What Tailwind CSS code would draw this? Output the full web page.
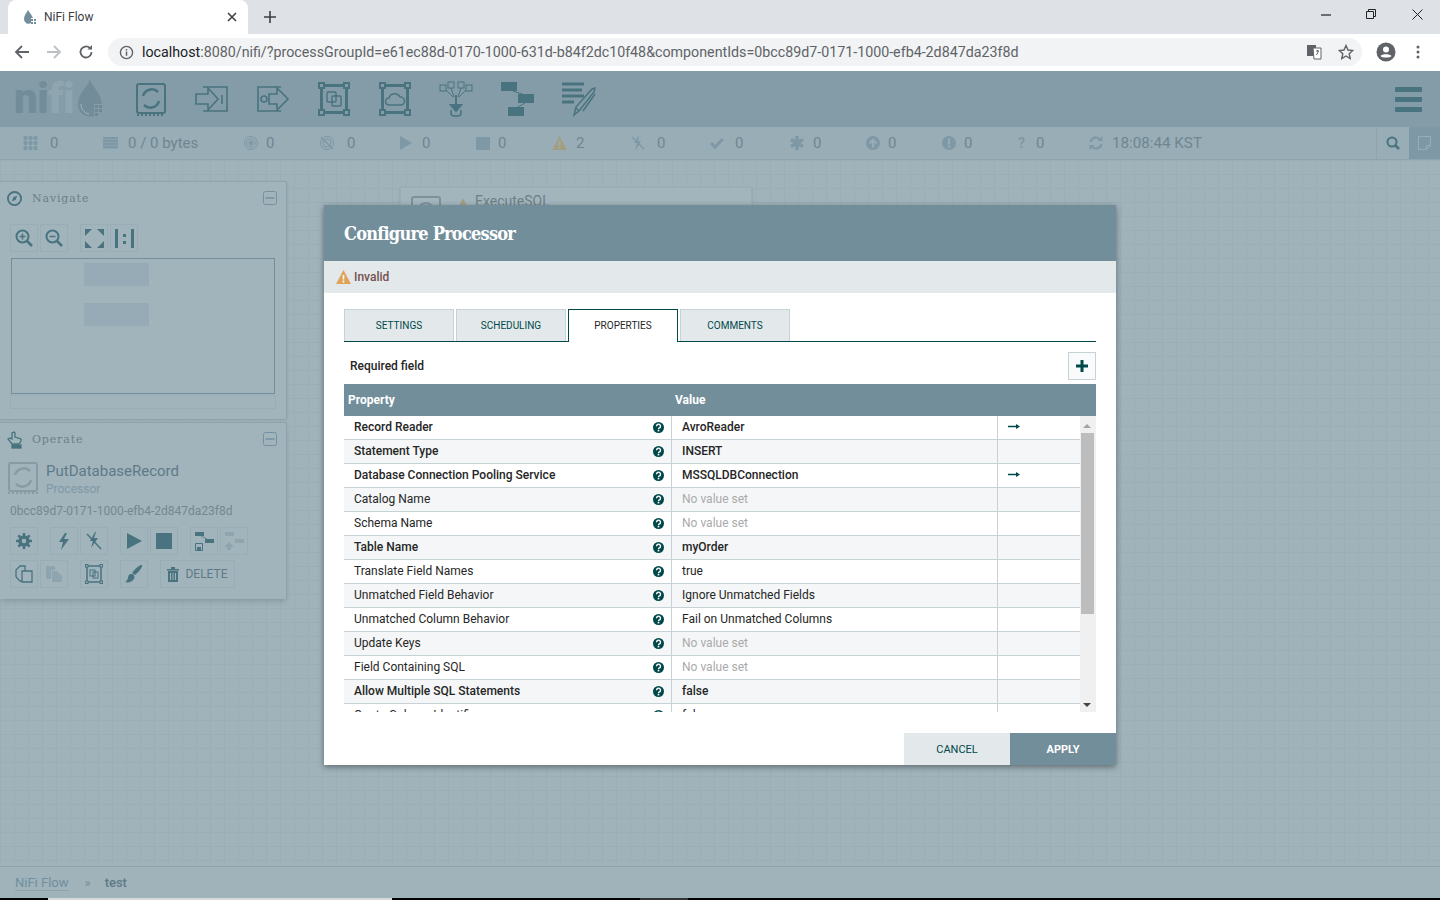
<!DOCTYPE html>
<html lang="en">
<head>
    <meta charset="UTF-8">
    <title>NiFi Flow</title>
    <script src="https://cdn.jsdelivr.net/npm/@tailwindcss/browser@4"></script>
</head>
<body class="font-['Roboto',sans-serif]">
<div class="relative flex h-[900px] w-[1440px] flex-col overflow-hidden bg-[#a0b3ba]">

    <!-- browser tab strip -->
    <div class="flex h-[34px] shrink-0 bg-[#dee1e6]">
        <div class="ml-2 flex h-[34px] w-[240px] items-center rounded-t-lg bg-white pl-[13px] pr-[11px]">
            <svg class="h-4 w-4 shrink-0" viewBox="0 0 16 16"><path d="M7 1C5.500 4 3 6.500 3 10a4.500 4.500 0 0 0 7 4V9h2C11 6 8.500 4 7 1z" fill="#728e9b"/><rect x="10" y="10" width="2" height="2" fill="#728e9b"/><rect x="13" y="10" width="2" height="2" fill="#728e9b"/><rect x="10" y="13" width="2" height="2" fill="#728e9b"/><rect x="13" y="13" width="2" height="2" fill="#728e9b"/></svg>
            <span class="ml-[7px] flex-1 text-xs text-[#3c4043]">NiFi Flow</span>
            <svg class="h-[10px] w-[10px]" viewBox="0 0 10 10"><path d="M1 1l8 8M9 1l-8 8" stroke="#3c4043" stroke-width="1.600"/></svg>
        </div>
        <svg class="ml-4 mt-[11px] h-3 w-3" viewBox="0 0 12 12"><path d="M6 0v12M0 6h12" stroke="#3c4043" stroke-width="1.600"/></svg>
        <div class="ml-auto flex">
            <svg class="mr-[35px] mt-[14px] h-[2px] w-[10px]" viewBox="0 0 10 2"><path d="M0 1h10" stroke="#222" stroke-width="1.200"/></svg>
            <svg class="mr-[36px] mt-[9px] h-[10px] w-[10px]" viewBox="0 0 10 10" fill="none"><path d="M.5 2.500h7v7h-7zM2.500 2.500v-2h7v7h-2" stroke="#222"/></svg>
            <svg class="mr-[17px] mt-[9px] h-[11px] w-[11px]" viewBox="0 0 11 11"><path d="M.5.5l10 10M10.500.5l-10 10" stroke="#222"/></svg>
        </div>
    </div>

    <!-- browser address bar -->
    <div class="flex h-[37px] shrink-0 items-start bg-white pt-[4px]">
        <svg class="ml-[14px] mt-[6px] h-4 w-4" viewBox="0 0 16 16" fill="none"><path d="M15 8H2M8 2L2 8l6 6" stroke="#5f6368" stroke-width="1.800"/></svg>
        <svg class="ml-4 mt-[6px] h-4 w-4" viewBox="0 0 16 16" fill="none"><path d="M1 8h13M8 2l6 6-6 6" stroke="#bdc1c6" stroke-width="1.800"/></svg>
        <svg class="ml-4 mt-[6px] h-4 w-4" viewBox="0 0 16 16" fill="none"><path d="M13.500 8A5.500 5.500 0 1 1 11.800 4" stroke="#5f6368" stroke-width="1.800"/><path d="M9.500 5.500H14V1z" fill="#5f6368"/></svg>
        <div class="ml-[14px] flex h-7 w-[1254px] items-center rounded-full bg-[#f1f3f4] pl-[11px]">
            <svg class="h-[15px] w-[15px]" viewBox="0 0 16 16" fill="none"><circle cx="8" cy="8" r="6.500" stroke="#5f6368" stroke-width="1.500"/><path d="M8 7v4.500M8 4.200v1.600" stroke="#5f6368" stroke-width="1.600"/></svg>
            <span class="ml-[8px] whitespace-nowrap pt-[2px] text-[14.250px] text-[#5f6368]"><span class="text-[#202124]">localhost</span>:8080/nifi/?processGroupId=e61ec88d-0170-1000-631d-b84f2dc10f48&amp;componentIds=0bcc89d7-0171-1000-efb4-2d847da23f8d</span>
            <svg class="ml-auto h-4 w-4" viewBox="0 0 16 16"><rect x="1" y="1" width="9" height="11" fill="#5f6368"/><path d="M7 4h8v11H8z" fill="#fff" stroke="#5f6368"/><path d="M10 7h3M11.500 6v1M10.500 11l2-4" stroke="#5f6368"/></svg>
            <svg class="ml-4 mr-2 h-4 w-4" viewBox="0 0 16 16" fill="none"><path d="M8 1.500l2 4.500 4.800.5-3.600 3.200 1 4.800L8 12l-4.200 2.500 1-4.800L1.200 6.500 6 6z" stroke="#5f6368" stroke-width="1.400"/></svg>
        </div>
        <svg class="ml-[14px] mt-1 h-5 w-5" viewBox="0 0 20 20"><circle cx="10" cy="10" r="9.500" fill="#5f6368"/><circle cx="10" cy="7.500" r="3" fill="#fff"/><path d="M4.500 14c1.500-2.500 9.500-2.500 11 0-1.500 2-9.500 2-11 0z" fill="#fff"/></svg>
        <svg class="ml-[20px] mt-[7px] h-[14px] w-1" viewBox="0 0 4 14" fill="#5f6368"><circle cx="2" cy="2" r="1.500"/><circle cx="2" cy="7" r="1.500"/><circle cx="2" cy="12" r="1.500"/></svg>
    </div>

    <!-- nifi toolbar -->
    <div class="flex h-[56px] shrink-0 items-center bg-[#849ca8]">
        <div class="ml-[14px] flex w-[121px] items-center">
            <span class="w-[62px] whitespace-nowrap text-[42px] leading-[56px] font-black tracking-[-0.500px] text-[#728c99]">ni<span class="text-[#8fa6b0]">fi</span></span>
            <svg class="ml-px h-[38px] w-[26px]" viewBox="0 0 26 38"><path d="M13 0c-3 7-12 14-12 24a12 12 0 0 0 16 12V24h8C24 14 16 7 13 0z" fill="#728c99"/><path d="M4 24c0 5 3 9 8 10" fill="none" stroke="#a5b7bf" stroke-width="1"/><g fill="#6f8894"><rect x="18" y="25" width="3" height="3"/><rect x="22" y="25" width="3" height="3"/><rect x="18" y="29" width="3" height="3"/><rect x="22" y="29" width="3" height="3"/><rect x="18" y="33" width="3" height="3"/></g></svg>
        </div>
        <svg class="h-9 w-[32px]" viewBox="0 0 32 36" fill="none" stroke="#48737f" stroke-width="2"><rect x="2" y="3" width="28" height="29" rx="2"/><path d="M8 15a9 9 0 0 1 15-4M24 20a9 9 0 0 1-15 4" stroke-width="2.500"/><path d="M2 34h28" stroke-dasharray="2 2"/></svg>
        <svg class="ml-[28px] h-8 w-[33px]" viewBox="0 0 33 32" fill="none" stroke="#48737f" stroke-width="1.600"><path d="M8 4h24v24H8M1 11h12V5l10 11-10 11v-6H1z"/><path d="M27 12v9"/></svg>
        <svg class="ml-[29px] h-8 w-[33px]" viewBox="0 0 33 32" fill="none" stroke="#48737f" stroke-width="1.600"><path d="M24 4H1v24h23M12 11h8V5l11 11-11 11v-6h-8z"/><circle cx="7" cy="16" r="3"/></svg>
        <svg class="ml-[28px] h-9 w-[32px]" viewBox="0 0 32 36" fill="none" stroke="#48737f" stroke-width="2"><rect x="1" y="2" width="5" height="5"/><rect x="26" y="2" width="5" height="5"/><rect x="1" y="29" width="5" height="5"/><rect x="26" y="29" width="5" height="5"/><path d="M7 4.500h18M3.500 8v20M28.500 8v20M7 31.500h18" stroke-width="3"/><rect x="9" y="11" width="9" height="10" rx="1" stroke-width="1.400"/><rect x="14" y="15" width="9" height="10" rx="1" stroke-width="1.400"/></svg>
        <svg class="ml-[29px] h-9 w-[32px]" viewBox="0 0 32 36" fill="none" stroke="#48737f" stroke-width="2"><rect x="1" y="2" width="5" height="5"/><rect x="26" y="2" width="5" height="5"/><rect x="1" y="29" width="5" height="5"/><rect x="26" y="29" width="5" height="5"/><path d="M7 4.500h18M3.500 8v20M28.500 8v20M7 31.500h18" stroke-width="3"/><path d="M10 24a3.500 3.500 0 0 1 0-7 6 6 0 0 1 11-1 4 4 0 0 1 1 8z" stroke-width="1.500"/></svg>
        <svg class="ml-[28px] h-9 w-[34px]" viewBox="0 0 34 36" fill="none" stroke="#48737f" stroke-width="1"><rect x="1" y="4" width="6" height="6"/><rect x="9" y="1" width="6" height="6"/><rect x="19" y="1" width="6" height="6"/><rect x="27" y="4" width="6" height="6"/><path d="M7 9l7 7M12 7l3 9M22 7l-3 9M27 9l-7 7"/><path d="M17 14v12M12 24h10l-5 6z" fill="#48737f" stroke-width="2"/><path d="M12 29v3a3 3 0 0 0 3 3h4a3 3 0 0 0 3-3v-3" stroke-width="1.500"/></svg>
        <svg class="ml-[28px] h-9 w-[33px]" viewBox="0 0 33 36" fill="#48737f"><rect x="0" y="1" width="16" height="9"/><rect x="17" y="13" width="16" height="9"/><rect x="7" y="26" width="16" height="9"/><path d="M12 10l12 4M24 22L15 27" stroke="#48737f" stroke-width="1"/></svg>
        <svg class="ml-[28px] h-9 w-[34px]" viewBox="0 0 34 36" fill="none" stroke="#48737f"><path d="M0 3h22M0 9h20M0 15h22M0 21h12" stroke-width="3"/><path d="M12 34l2-8L30 8l3-1-1 4-15 19z" stroke-width="1.500"/><path d="M14 27l3 3M33 13L21 30" stroke-width="1.500"/></svg>
        <svg class="ml-auto mr-[18px] h-[25px] w-[27px]" viewBox="0 0 27 25" fill="#48737f"><rect width="27" height="5" rx="1"/><rect y="10" width="27" height="5" rx="1"/><rect y="20" width="27" height="5" rx="1"/></svg>
    </div>

    <!-- status bar -->
    <div class="flex h-[33px] shrink-0 items-center border-b border-[#8ea3ad] bg-[#98adb6] pl-[23px] text-[15px] text-[#6f8692]">
        <div class="flex w-[80px] items-center"><svg class="h-4 w-[27px] pr-[12px]" viewBox="0 0 15 16" fill="#7f98a5"><circle cx="2.500" cy="3" r="2.200"/><circle cx="7.500" cy="3" r="2.200"/><circle cx="12.500" cy="3" r="2.200"/><circle cx="2.500" cy="8" r="2.200"/><circle cx="7.500" cy="8" r="2.200"/><circle cx="12.500" cy="8" r="2.200"/><circle cx="2.500" cy="13" r="2.200"/><circle cx="7.500" cy="13" r="2.200"/><circle cx="12.500" cy="13" r="2.200"/></svg>0</div>
        <div class="flex w-[141px] items-center"><svg class="h-3 w-[25px] pr-[10px]" viewBox="0 0 15 12" fill="#7f98a5"><rect width="15" height="2.500"/><rect y="3" width="15" height="2.500"/><rect y="6" width="15" height="2.500"/><rect y="9" width="15" height="2.500"/></svg>0 / 0 bytes</div>
        <div class="flex w-[76px] items-center"><svg class="h-[14px] w-[22px] pr-2" viewBox="0 0 14 14" fill="none" stroke="#7f98a5"><circle cx="7" cy="7" r="6.500"/><circle cx="7" cy="7" r="4.200"/><circle cx="7" cy="7" r="2" fill="#7f98a5"/></svg>0</div>
        <div class="flex w-[80px] items-center"><svg class="h-[14px] w-[27px] pr-[13px]" viewBox="0 0 14 14" fill="none" stroke="#7f98a5"><circle cx="7" cy="7" r="6.500"/><circle cx="7" cy="7" r="4"/><path d="M1 1l12 12" stroke-width="1.500"/></svg>0</div>
        <div class="flex w-[76px] items-center"><svg class="h-[14px] w-[22px] pr-[10px]" viewBox="0 0 12 14" fill="#7f98a5"><path d="M0 0l12 7-12 7z"/></svg>0</div>
        <div class="flex w-[76px] items-center"><svg class="h-[13px] w-[22px] pr-2" viewBox="0 0 14 13" fill="#7f98a5"><rect width="14" height="13"/></svg>0</div>
        <div class="flex w-[79px] items-center"><svg class="h-[14px] w-[24px] pr-[9px]" viewBox="0 0 15 14"><path d="M7.500 0L15 14H0z" fill="#a39e82"/><path d="M7.500 5v5M7.500 11v2" stroke="#98adb6" stroke-width="1.500"/></svg>2</div>
        <div class="flex w-[79px] items-center"><svg class="h-[16px] w-[26px] pr-[12px]" viewBox="0 0 14 16" fill="#7f98a5"><path d="M8 0L3 8h3l-2 8 6-10H7z"/><path d="M1 2l12 12" stroke="#7f98a5" stroke-width="1.300"/></svg>0</div>
        <div class="flex w-[80px] items-center"><svg class="h-3 w-[25px] pr-[11px]" viewBox="0 0 14 12" fill="none" stroke="#7f98a5" stroke-width="3"><path d="M1 6l4 4 8-8"/></svg>0</div>
        <div class="flex w-[76px] items-center"><svg class="h-[14px] w-[23px] pr-[9px]" viewBox="0 0 14 14" stroke="#7f98a5" stroke-width="3.500"><path d="M7 0v14M1 3.500l12 7M13 3.500l-12 7"/></svg>0</div>
        <div class="flex w-[76px] items-center"><svg class="h-[14px] w-[22px] pr-2" viewBox="0 0 14 14"><circle cx="7" cy="7" r="7" fill="#7f98a5"/><path d="M7 11.500V4M3.500 7.500L7 4l3.500 3.500" fill="none" stroke="#98adb6" stroke-width="2"/></svg>0</div>
        <div class="flex w-[76px] items-center"><svg class="h-[14px] w-[22px] pr-2" viewBox="0 0 14 14"><circle cx="7" cy="7" r="7" fill="#7f98a5"/><path d="M7 2.500v6M7 9.500v2" stroke="#98adb6" stroke-width="2"/></svg>0</div>
        <div class="flex w-[71px] items-center"><span class="w-[18px] text-[14px] font-bold text-[#7f98a5]">?</span>0</div>
        <div class="flex items-center text-[15.200px]"><svg class="h-[14px] w-[23px] pr-[9px]" viewBox="0 0 14 14" fill="none" stroke="#7f98a5" stroke-width="2.200"><path d="M1.500 6a5.500 5.500 0 0 1 10-2M12.500 8a5.500 5.500 0 0 1-10 2"/><path d="M13.500 0v5h-5zM.5 14V9h5z" fill="#7f98a5" stroke="none"/></svg>18:08:44 KST</div>
        <div class="ml-auto flex h-full items-center border-l border-[#8ea3ad]">
            <svg class="mx-[9px] h-[14px] w-[14px]" viewBox="0 0 14 14" fill="none" stroke="#48737f" stroke-width="2"><circle cx="6" cy="6" r="4.500"/><path d="M9.500 9.500L13 13" stroke-width="2.500"/></svg>
            <div class="flex h-full w-[31px] items-center justify-center bg-[#7f98a5]"><svg class="h-[14px] w-[13px]" viewBox="0 0 13 14" fill="none" stroke="#98adb6"><path d="M.5.500h12v9l-4 4h-8z"/><path d="M8.500 13.500v-4h4"/></svg></div>
        </div>
    </div>

    <!-- canvas -->
    <div class="relative flex-1 bg-[linear-gradient(to_right,#9baeb6_1px,transparent_1px),linear-gradient(to_bottom,#9baeb6_1px,transparent_1px)] bg-[size:14px_14px]">
        <!-- ExecuteSQL component behind the dialog -->
        <div class="absolute left-[400px] top-[27px] flex h-[60px] w-[352px] border border-[#98adb6] bg-[#a2b5bc] shadow-sm">
            <svg class="ml-[10px] mt-[8px] h-[30px] w-[30px]" viewBox="0 0 30 30" fill="none" stroke="#7d919b" stroke-width="2"><rect x="1" y="1" width="28" height="28" rx="2"/><circle cx="15" cy="15" r="8"/></svg>
            <svg class="ml-[16px] mt-[10px] h-3 w-[12px]" viewBox="0 0 12 12"><path d="M6 0l6 12H0z" fill="#a39e82"/></svg>
            <span class="ml-[6px] mt-[3px] text-sm text-[#6d7f88]">ExecuteSQL</span>
        </div>

        <!-- navigate panel -->
        <div class="absolute left-0 top-[21px] h-[238px] w-[287px] border-r border-t border-[#8ea3ad] bg-[#a1b4bc] shadow-sm">
            <div class="flex h-[33px] items-center pl-[7px] pr-[9px]">
                <svg class="h-[15px] w-[15px]" viewBox="0 0 16 16" fill="none"><circle cx="8" cy="8" r="7" stroke="#48737f" stroke-width="2"/><path d="M11 5L9 9.500 5 11l2-4.500z" fill="#48737f"/></svg>
                <span class="ml-[10px] pt-[2px] font-['DejaVu_Serif',serif] text-[11px] tracking-[0.850px] text-[#6d7f88]">Navigate</span>
                <svg class="mb-px ml-auto h-[14px] w-[14px]" viewBox="0 0 14 14" fill="none" stroke="#7590a0"><rect x=".5" y=".5" width="13" height="13" rx="2"/><path d="M2.500 7h9" stroke-width="1.500"/></svg>
            </div>
            <div class="ml-[10px] mt-[9px] flex">
                <div class="flex h-7 w-7 items-center justify-center border border-[#98adb6]"><svg class="h-[18px] w-[18px]" viewBox="0 0 18 18" fill="none" stroke="#48737f" stroke-width="2"><circle cx="7.500" cy="7.500" r="6"/><path d="M12 12l5 5" stroke-width="2.500"/><path d="M7.500 4.500v6M4.500 7.500h6" stroke-width="1.500"/></svg></div>
                <div class="ml-[2px] flex h-7 w-7 items-center justify-center border border-[#98adb6]"><svg class="h-[18px] w-[18px]" viewBox="0 0 18 18" fill="none" stroke="#48737f" stroke-width="2"><circle cx="7.500" cy="7.500" r="6"/><path d="M12 12l5 5" stroke-width="2.500"/><path d="M4.500 7.500h6" stroke-width="1.500"/></svg></div>
                <div class="ml-3 flex h-7 w-7 items-center justify-center border border-[#98adb6]"><svg class="h-[19px] w-[19px]" viewBox="0 0 19 19" fill="#48737f"><path d="M0 0h7L0 7zM19 0v7l-7-7zM0 19v-7l7 7zM19 19h-7l7-7z"/></svg></div>
                <div class="ml-[2px] flex h-7 w-7 items-center justify-center border border-[#98adb6]"><svg class="h-[19px] w-[19px]" viewBox="0 0 19 19" fill="#48737f"><rect width="3" height="19"/><rect x="16" width="3" height="19"/><rect x="8" y="5" width="3" height="3"/><rect x="8" y="12" width="3" height="3"/></svg></div>
            </div>
            <div class="ml-[11px] mt-[6px] h-[136px] w-[264px] border border-[#728e9b] pl-[72px] pt-[4px]">
                <div class="h-[23px] w-[65px] bg-[#97abb6]"></div>
                <div class="mt-[17px] h-[23px] w-[65px] bg-[#97abb6]"></div>
            </div>
            <div class="ml-[10px] mt-px h-[14px] w-[266px] border border-[#98adb6]"></div>
        </div>

        <!-- operate panel -->
        <div class="absolute left-0 top-[262px] h-[177px] w-[287px] border-r border-t border-[#8ea3ad] bg-[#a1b4bc] shadow-md">
            <div class="flex h-[33px] items-center pl-[7px] pr-[9px]">
                <svg class="h-[18px] w-[16px]" viewBox="0 0 16 18" fill="none" stroke="#48737f" stroke-width="1.300"><path d="M5 13L1 8l2-1 2 1V2l2-1 1 1v4l6 2v2l-2 3z"/><rect x="5" y="14" width="9" height="3" fill="#48737f"/></svg>
                <span class="ml-[9px] pt-[2px] font-['DejaVu_Serif',serif] text-[11px] tracking-[0.850px] text-[#6d7f88]">Operate</span>
                <svg class="mb-px ml-auto h-[14px] w-[14px]" viewBox="0 0 14 14" fill="none" stroke="#7590a0"><rect x=".5" y=".5" width="13" height="13" rx="2"/><path d="M2.500 7h9" stroke-width="1.500"/></svg>
            </div>
            <div class="ml-2 mt-[6px] flex">
                <svg class="h-[32px] w-[30px]" viewBox="0 0 30 32" fill="none" stroke="#8a9aa2" stroke-width="2"><rect x="1" y="1" width="28" height="28" rx="2"/><path d="M7 13a9 9 0 0 1 15-4M23 18a9 9 0 0 1-15 4" stroke-width="2.500"/><path d="M0 31h30" stroke-dasharray="2 2"/></svg>
                <div class="ml-2">
                    <div class="text-[15px] leading-[19px] text-[#5f7a87]">PutDatabaseRecord</div>
                    <div class="mt-px text-xs leading-[15px] text-[#7f98a5]">Processor</div>
                </div>
            </div>
            <div class="ml-[10px] mt-[5px] text-xs leading-[18px] text-[#74878f]">0bcc89d7-0171-1000-efb4-2d847da23f8d</div>
            <div class="ml-[10px] mt-[7px] flex">
                <div class="flex h-7 w-7 items-center justify-center border border-[#98adb6]"><svg class="h-4 w-4" viewBox="0 0 16 16" fill="none" stroke="#48737f"><circle cx="8" cy="8" r="4" stroke-width="3.500"/><path d="M8 0v3M8 13v3M0 8h3M13 8h3M2.300 2.300l2.100 2.100M11.600 11.600l2.100 2.100M13.700 2.300l-2.100 2.100M4.400 11.600l-2.100 2.100" stroke-width="2.500"/></svg></div>
                <div class="ml-3 flex h-7 w-7 items-center justify-center border border-[#98adb6]"><svg class="h-[17px] w-[10px]" viewBox="0 0 10 17" fill="#48737f"><path d="M6 0L0 9h4l-2 8 8-11H5l3-6z"/></svg></div>
                <div class="ml-[2px] flex h-7 w-7 items-center justify-center border border-[#98adb6]"><svg class="h-[19px] w-4" viewBox="0 0 16 19" fill="#48737f"><path d="M9 0L4 9h3l-2 7 7-10H8l2-6z"/><path d="M1 2l14 15" stroke="#48737f" stroke-width="1.500"/></svg></div>
                <div class="ml-3 flex h-7 w-7 items-center justify-center border border-[#98adb6]"><svg class="h-4 w-[15px]" viewBox="0 0 15 16" fill="#48737f"><path d="M0 0l15 8-15 8z"/></svg></div>
                <div class="ml-[2px] flex h-7 w-7 items-center justify-center border border-[#98adb6]"><div class="h-4 w-4 bg-[#48737f]"></div></div>
                <div class="ml-3 flex h-7 w-7 items-center justify-center border border-[#98adb6]"><svg class="h-[20px] w-[20px]" viewBox="0 0 20 20" fill="#48737f"><rect x="1" y="1" width="9" height="4"/><rect x="11" y="8" width="9" height="4"/><path d="M7 5l6 3" stroke="#48737f" stroke-width=".7"/><path d="M1.500 12.500h7v7h-7z" fill="none" stroke="#48737f"/><rect x="3" y="16" width="4" height="3"/></svg></div>
                <div class="ml-[2px] flex h-7 w-7 items-center justify-center border border-[#98adb6]"><svg class="h-[20px] w-[20px]" viewBox="0 0 20 20" fill="#8ea5af"><rect x="1" y="1" width="9" height="4"/><rect x="11" y="8" width="9" height="4"/><path d="M5 11l5 5H7v3H3v-3H0z"/></svg></div>
            </div>
            <div class="ml-[10px] mt-[5px] flex">
                <div class="flex h-7 w-7 items-center justify-center border border-[#98adb6]"><svg class="h-[18px] w-[18px]" viewBox="0 0 18 18" fill="none" stroke="#48737f" stroke-width="1.300"><path d="M1 12V5l4-4h5v5"/><path d="M7 6h10v11H7z"/><path d="M1 12l4 4h2"/></svg></div>
                <div class="ml-[2px] flex h-7 w-7 items-center justify-center border border-[#98adb6]"><svg class="h-[18px] w-[18px]" viewBox="0 0 18 18" fill="#8ea5af"><path d="M1 1h9v4H6v9H1z"/><path d="M7 6h5l5 5v6H7z"/></svg></div>
                <div class="ml-3 flex h-7 w-7 items-center justify-center border border-[#98adb6]"><svg class="h-[20px] w-[18px]" viewBox="0 0 18 20" fill="none" stroke="#48737f"><rect x=".5" y=".5" width="2.500" height="2.500"/><rect x="15" y=".5" width="2.500" height="2.500"/><rect x=".5" y="17" width="2.500" height="2.500"/><rect x="15" y="17" width="2.500" height="2.500"/><path d="M3 2h12M2 3v14M16 3v14M3 18h12" stroke-width="1.500"/><rect x="5" y="6" width="5" height="6"/><rect x="8" y="8" width="5" height="6"/></svg></div>
                <div class="ml-3 flex h-7 w-7 items-center justify-center border border-[#98adb6]"><svg class="h-[18px] w-[18px]" viewBox="0 0 18 18" fill="#48737f"><path d="M17 0c1 2-4 8-7 10L7 8c2-3 8-9 10-8z"/><path d="M6 9c3 0 4 2 3 5-2 3-6 4-9 3 2-1 2-2 3-4 0-2 1-4 3-4z"/></svg></div>
                <div class="ml-3 flex h-7 w-[75px] items-center justify-center gap-[6px] border border-[#98adb6] text-xs text-[#5f7a87]"><svg class="h-[15px] w-[12px]" viewBox="0 0 12 15" fill="#48737f"><rect y="2" width="12" height="1.500"/><rect x="4" width="4" height="2"/><path d="M1 4h10v11H1zM3 6v7h1V6zM5.500 6v7h1V6zM8 6v7h1V6z" fill-rule="evenodd"/></svg>DELETE</div>
            </div>
        </div>
    </div>

    <!-- breadcrumb -->
    <div class="flex h-[32px] shrink-0 items-center border-t border-[#8ea3ad] pl-[15px] text-[13px] text-[#5f7a87]">
        <span class="border-b border-[#8ea3ad] leading-[15px] text-[#6f8f9f]">NiFi Flow</span>
        <span class="ml-4 text-[13px] text-[#728e9b]">»</span>
        <span class="ml-[14px] font-medium">test</span>
    </div>
    <!-- bottom sliver of the screen -->
    <div class="flex h-[2px] shrink-0 bg-black">
        <div class="ml-12 w-[344px] bg-[#d9d9d9]"></div>
        <div class="ml-[248px] w-[48px] bg-[#333]"></div>
    </div>

    <!-- configure processor dialog -->
    <div class="absolute left-[324px] top-[205px] flex h-[560px] w-[792px] flex-col bg-white shadow-[0_2px_6px_rgba(0,0,0,0.4)]">
        <div class="flex h-14 shrink-0 items-center bg-[#728e9b] pl-5 font-['DejaVu_Serif_Condensed','DejaVu_Serif',serif] text-[18px] font-bold tracking-[-0.750px] text-white [font-stretch:condensed]">Configure Processor</div>
        <div class="flex h-8 shrink-0 items-center bg-[#e3e8eb] pl-3 text-xs font-medium text-[#75504f]">
            <svg class="h-[14px] w-[15px]" viewBox="0 0 15 14"><path d="M7.500 0L15 14H0z" fill="#e0a35a"/><path d="M7.500 5v4.500M7.500 10.500v2" stroke="#fff" stroke-width="1.600"/></svg>
            <span class="ml-[3px]">Invalid</span>
        </div>
        <div class="relative flex-1 px-5 pt-4">
            <div class="flex h-[33px] gap-[2px] border-b border-[#004849] text-[10px]">
                <div class="flex h-[32px] w-[110px] items-center justify-center border border-b-0 border-[#c7d2d7] bg-[#e3e8eb] text-[#004849]">SETTINGS</div>
                <div class="flex h-[32px] w-[110px] items-center justify-center border border-b-0 border-[#c7d2d7] bg-[#e3e8eb] text-[#004849]">SCHEDULING</div>
                <div class="flex h-[33px] w-[110px] items-center justify-center border border-b-0 border-[#004849] bg-white pb-px text-[#262626]">PROPERTIES</div>
                <div class="flex h-[32px] w-[110px] items-center justify-center border border-b-0 border-[#c7d2d7] bg-[#e3e8eb] text-[#004849]">COMMENTS</div>
            </div>
            <div class="flex h-[42px] items-center justify-between pl-[6px] pt-[6px]">
                <span class="text-xs font-medium text-[#262626]">Required field</span>
                <div class="flex h-7 w-7 items-center justify-center border border-[#c7d2d7] bg-[#f8fafb]"><svg class="h-3 w-3" viewBox="0 0 12 12"><path d="M6 0v12M0 6h12" stroke="#004849" stroke-width="3"/></svg></div>
            </div>
            <div class="flex h-8 items-center bg-[#728e9b] text-xs font-bold text-white"><span class="w-[331px] pl-1">Property</span><span>Value</span></div>
            <div class="flex h-[296px] overflow-hidden">
                <div id="rows" class="w-[736px]"></div>
                <div class="relative w-4 bg-[#f0f0f0]">
                    <div class="ml-[3px] mt-[8px] h-0 w-0 border-x-[4px] border-b-[4px] border-x-transparent border-b-[#a3a3a3]"></div>
                    <div class="ml-px mt-[5px] h-[181px] w-[13px] bg-[#bdbdbd]"></div>
                    <div class="absolute bottom-[5px] left-[3px] h-0 w-0 border-x-[4px] border-t-[4px] border-x-transparent border-t-[#444]"></div>
                </div>
            </div>
        </div>
        <div class="absolute bottom-0 right-0 flex h-8 text-[11px]">
            <div class="flex w-[106px] items-center justify-center bg-[#e3e8eb] pt-[2px] text-[#004849]">CANCEL</div>
            <div class="flex w-[106px] items-center justify-center bg-[#728e9b] pt-[2px] font-bold text-white">APPLY</div>
        </div>
    </div>
</div>

<script>
    // [property, value, required, hasArrow]
    const props = [
        ['Record Reader', 'AvroReader', true, true],
        ['Statement Type', 'INSERT', true, false],
        ['Database Connection Pooling Service', 'MSSQLDBConnection', true, true],
        ['Catalog Name', null, false, false],
        ['Schema Name', null, false, false],
        ['Table Name', 'myOrder', true, false],
        ['Translate Field Names', 'true', false, false],
        ['Unmatched Field Behavior', 'Ignore Unmatched Fields', false, false],
        ['Unmatched Column Behavior', 'Fail on Unmatched Columns', false, false],
        ['Update Keys', null, false, false],
        ['Field Containing SQL', null, false, false],
        ['Allow Multiple SQL Statements', 'false', true, false],
        ['Quote Column Identifiers', 'false', false, false]
    ];
    const help = '<svg class="h-[11px] w-[11px]" viewBox="0 0 11 11"><circle cx="5.500" cy="5.500" r="5.500" fill="#004849"/><path d="M3.500 4.200a2 2 0 1 1 3 1.700c-.7.400-1 .7-1 1.300" fill="none" stroke="#fff" stroke-width="1.400"/><rect x="4.700" y="7.900" width="1.600" height="1.500" fill="#fff"/></svg>';
    const arrow = '<svg class="h-[7px] w-3" viewBox="0 0 12 7" fill="#004849"><path d="M0 2.800h8v1.400H0zM8 1l4 2.500L8 6z"/></svg>';

    document.getElementById('rows').innerHTML = props.map(([name, value, required, hasArrow], i) => {
        const bg = i % 2 ? 'bg-[#f4f6f7]' : 'bg-white';
        const weight = required ? 'font-medium' : '';
        const val = value === null
            ? '<span class="text-[#aaaaaa]">No value set</span>'
            : `<span class="${weight}">${value}</span>`;
        return `<div class="flex h-6 items-center border-b border-[#c7d2d7] text-xs text-[#262626] ${bg}">
            <div class="flex h-full w-[328px] items-center justify-between border-r border-[#c7d2d7] pb-px pl-[10px] pr-[7px]"><span class="${weight}">${name}</span>${help}</div>
            <div class="flex h-full w-[326px] items-center border-r border-[#c7d2d7] pb-px pl-[10px]">${val}</div>
            <div class="flex h-full items-center pb-[2px] pl-[10px]">${hasArrow ? arrow : ''}</div>
        </div>`;
    }).join('');
</script>
</body>
</html>
